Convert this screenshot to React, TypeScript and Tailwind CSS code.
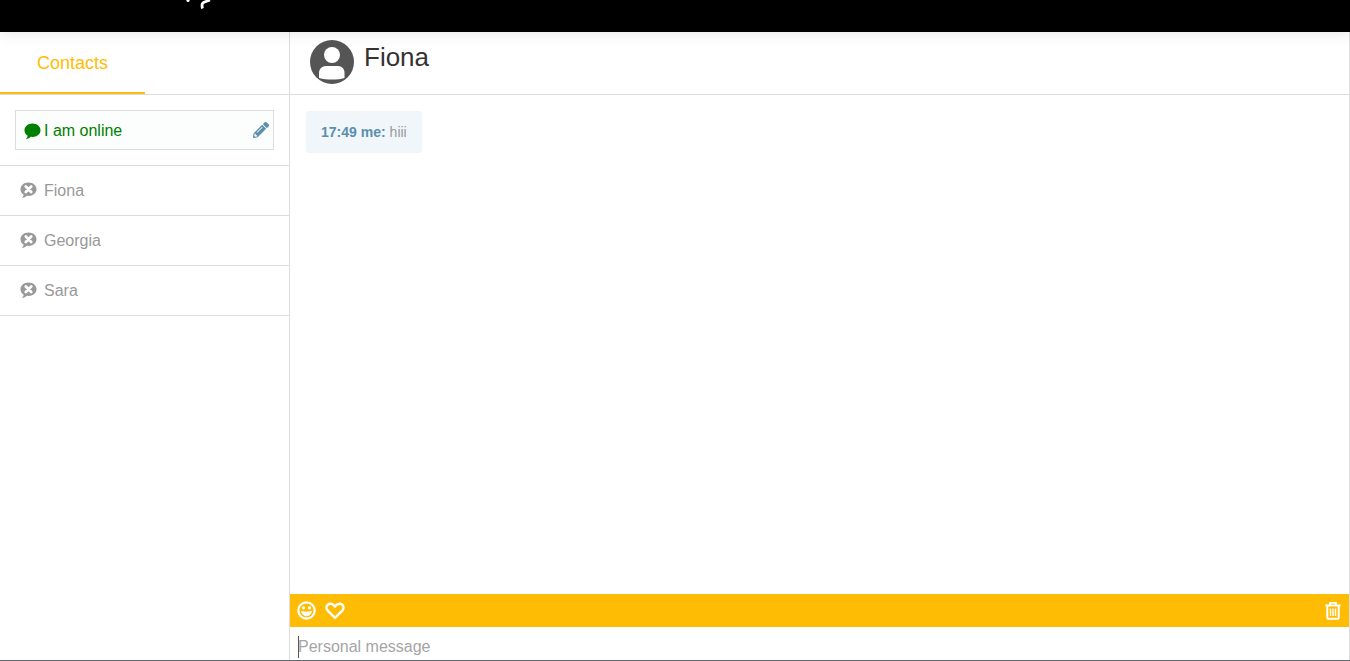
import { FaPencilAlt } from "react-icons/fa"

const contacts = ["Fiona", "Georgia", "Sara"]

const bubble = "M8.5 0.5C13 0.5 16.500 3.400 16.500 7.200S13 13.900 8.500 13.900C7.900 13.900 7.400 13.900 6.900 13.800C5.700 15 4 15.700 1.800 16C2.900 14.900 3.500 13.900 3.700 12.700C1.800 11.500 0.500 9.500 0.500 7.200C0.500 3.400 4 0.500 8.500 0.500Z"

function OfflineIcon() {
    return (
        <svg width="17" height="17" viewBox="0 0 17 17" className="shrink-0">
            <path d={bubble} fill="#999999" />
            <path d="M5.800 4.500L11.200 9.900M11.200 4.500L5.800 9.900" stroke="#fff" strokeWidth="2.800" strokeLinecap="round" />
        </svg>
    )
}

function Avatar() {
    return (
        <svg width="44" height="44" viewBox="0 0 44 44" className="shrink-0">
            <circle cx="22" cy="22" r="22" fill="#555555" />
            <circle cx="22" cy="15" r="8" fill="#fff" />
            <path d="M9 38V33C9 29 12 26 16 26H28C32 26 34.500 29 34.500 33V38C31 39 27 39.500 22 39.500S13 39 9 38Z" fill="#fff" />
        </svg>
    )
}

function SmileIcon() {
    return (
        <svg width="19" height="19" viewBox="0 0 19 19" fill="none">
            <circle cx="9.500" cy="9.500" r="8.200" stroke="#fff" strokeWidth="2.200" />
            <circle cx="6.500" cy="6.800" r="1.600" fill="#fff" />
            <circle cx="12.500" cy="6.800" r="1.600" fill="#fff" />
            <path d="M4.500 10.500C5.200 13.200 7.200 14.800 9.500 14.800S13.800 13.200 14.500 10.500C11.500 11.300 7.500 11.300 4.500 10.500Z" fill="#fff" stroke="#fff" strokeWidth="1" strokeLinejoin="round" />
        </svg>
    )
}

function HeartIcon() {
    return (
        <svg width="20" height="18" viewBox="0 0 20 18" fill="none">
            <path d="M10 15.800L2.900 8.800C1 6.900 1 4.200 2.800 2.700C4.700 1.200 7.800 1.500 10 4.500C12.200 1.500 15.300 1.200 17.200 2.700C19 4.200 19 6.900 17.100 8.800Z" stroke="#fff" strokeWidth="2.400" strokeLinejoin="round" />
        </svg>
    )
}

function TrashIcon() {
    return (
        <svg width="16" height="19" viewBox="0 0 16 19" fill="none">
            <path d="M0.500 4.500H15.500" stroke="#fff" strokeWidth="2" />
            <path d="M5 4V1.800H11V4" stroke="#fff" strokeWidth="1.800" />
            <path d="M2.300 5V16.200C2.300 17.200 2.900 17.800 3.800 17.800H12.200C13.100 17.800 13.700 17.200 13.700 16.200V5" stroke="#fff" strokeWidth="2" />
            <path d="M5.500 7.500V15M8 7.500V15M10.500 7.500V15" stroke="#fff" strokeWidth="1.400" />
        </svg>
    )
}

export default function App() {
    return (
        <div className="h-[661px] w-[1350px] flex flex-col overflow-hidden bg-white font-['Liberation_Sans',Arial,sans-serif]">
            {/* top bar, logo is cut off by the top edge */}
            <div className="h-8 shrink-0 bg-black relative z-10 shadow-[0_3px_14px_rgba(0,0,0,0.09)] overflow-hidden">
                <svg width="40" height="10" viewBox="0 0 40 10" className="ml-[180px]">
                    <circle cx="8" cy="0.500" r="1.600" fill="#fff" />
                    <path d="M22.500 8.500C21.500 5 22 3 24 2.200L30 0" stroke="#fff" strokeWidth="2.800" fill="none" />
                </svg>
            </div>

            <div className="flex-1 min-h-0 flex border-b border-[#5f6b70]">
                {/* sidebar */}
                <div className="w-[290px] shrink-0 border-r border-[#dddddd] flex flex-col">
                    <div className="h-[63px] shrink-0 border-b border-[#dddddd]">
                        <div className="w-[145px] h-[62px] border-b-2 border-[#ffbc05] flex items-center justify-center pt-0.5 text-lg leading-none text-[#ffbc05]">
                            Contacts
                        </div>
                    </div>
                    <div className="h-[71px] shrink-0 border-b border-[#dddddd] px-[15px] pt-[15px]">
                        <div className="h-10 w-[259px] border border-[#dddddd] bg-[#fbfefc] flex items-center pl-2 pr-1 pt-0.5 text-base text-[#008000]">
                            <svg width="17" height="17" viewBox="0 0 17 17" className="mr-[3px] shrink-0">
                                <path d={bubble} fill="#008000" />
                            </svg>
                            <span className="flex-1">I am online</span>
                            <FaPencilAlt className="text-[16px] text-[#5b8fad] -mt-0.5" />
                        </div>
                    </div>
                    {contacts.map((name) => (
                        <div key={name} className="h-[50px] shrink-0 border-b border-[#dddddd] flex items-center gap-[7px] pl-5 text-base text-[#999999]">
                            <OfflineIcon />
                            <span>{name}</span>
                        </div>
                    ))}
                </div>

                {/* chat */}
                <div className="flex-1 min-w-0 flex flex-col border-r border-[#dddddd]">
                    <div className="h-[63px] shrink-0 border-b border-[#dddddd] flex items-start pl-5 pt-2 gap-[10px]">
                        <Avatar />
                        <span className="text-[26px] leading-[34px] text-[#333333]">Fiona</span>
                    </div>
                    <div className="flex-1 min-h-0 pt-4 pl-4">
                        <div className="inline-flex h-[42px] items-center gap-1 rounded-[3px] bg-[#f0f6fa] px-[15px] text-sm text-[#999999]">
                            <b className="text-[#5b8fad]">17:49 me:</b> hiii
                        </div>
                    </div>
                    <div className="h-[33px] shrink-0 bg-[#ffbc05] flex items-center pl-[7px] pr-2 gap-[9px]">
                        <SmileIcon />
                        <HeartIcon />
                        <span className="ml-auto flex"><TrashIcon /></span>
                    </div>
                    <div className="h-[33px] shrink-0 flex items-center pl-2 pt-1.5 text-base text-[#a5a5a5]">
                        <span className="border-l border-[#555555] leading-[22px] -mr-px"><span className="-ml-px">Personal message</span></span>
                    </div>
                </div>
            </div>
        </div>
    )
}
